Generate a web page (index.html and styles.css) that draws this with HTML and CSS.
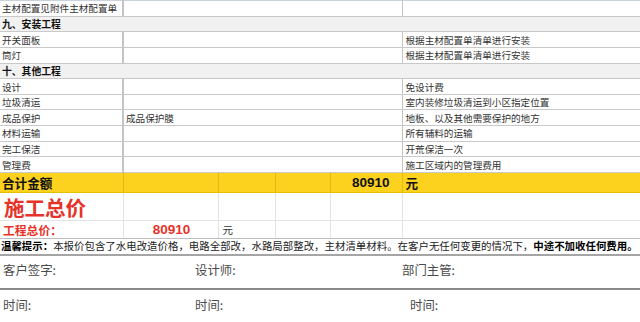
FILE: index.html
```html
<!DOCTYPE html>
<html lang="zh-CN">
<head>
<meta charset="utf-8">
<link rel="stylesheet" href="styles.css">
</head>
<body>
<table class="sheet">
  <colgroup>
    <col class="c1"><col class="c2"><col class="c3"><col class="c4"><col class="c5"><col class="c6">
  </colgroup>
  <tr class="r"><td class="k">主材配置见附件主材配置单</td><td colspan="4"></td><td class="d"></td></tr>
  <tr class="r sec"><td colspan="6">九、安装工程</td></tr>
  <tr class="r"><td class="k">开关面板</td><td colspan="4"></td><td class="d">根据主材配置单清单进行安装</td></tr>
  <tr class="r"><td class="k">筒灯</td><td colspan="4"></td><td class="d">根据主材配置单清单进行安装</td></tr>
  <tr class="r sec"><td colspan="6">十、其他工程</td></tr>
  <tr class="r"><td class="k">设计</td><td colspan="4"></td><td class="d">免设计费</td></tr>
  <tr class="r"><td class="k">垃圾清运</td><td colspan="4"></td><td class="d">室内装修垃圾清运到小区指定位置</td></tr>
  <tr class="r"><td class="k">成品保护</td><td colspan="4" class="m">成品保护膜</td><td class="d">地板、以及其他需要保护的地方</td></tr>
  <tr class="r"><td class="k">材料运输</td><td colspan="4"></td><td class="d">所有辅料的运输</td></tr>
  <tr class="r"><td class="k">完工保洁</td><td colspan="4"></td><td class="d">开荒保洁一次</td></tr>
  <tr class="r"><td class="k">管理费</td><td colspan="4"></td><td class="d">施工区域内的管理费用</td></tr>
  <tr class="total"><td class="tl">合计金额</td><td></td><td></td><td></td><td class="num">80910</td><td class="unit">元</td></tr>
  <tr class="big"><td class="bt">施工总价</td><td></td><td></td><td></td><td></td><td></td></tr>
  <tr class="sum"><td class="st">工程总价：</td><td class="sn">80910</td><td class="su">元</td><td></td><td></td><td></td></tr>
  <tr class="tip"><td colspan="6"><b>温馨提示：</b>本报价包含了水电改造价格，电路全部改，水路局部整改，主材清单材料。在客户无任何变更的情况下，<b>中途不加收任何费用。</b></td></tr>
</table>
<div class="sig">
  <div class="sig-row first">
    <span class="s1">客户签字:</span><span class="s2">设计师:</span><span class="s3">部门主管:</span>
  </div>
  <div class="sig-row second">
    <span class="s1">时间:</span><span class="s2">时间:</span><span class="s3 shift">时间:</span>
  </div>
</div>
</body>
</html>
```
FILE: styles.css
```css
html, body {
  margin: 0;
  padding: 0;
  background: #fff;
}
body {
  width: 640px;
  height: 322px;
  overflow: hidden;
  font-family: "Noto Sans CJK SC", sans-serif;
  color: #222;
}
.sheet {
  width: 640px;
  table-layout: fixed;
  border-collapse: collapse;
  border-top: 1px solid #c8d2dd;
}
.c1 { width: 123px; }
.c2 { width: 95px; }
.c3 { width: 57px; }
.c4 { width: 55px; }
.c5 { width: 72px; }
.c6 { width: 238px; }
.sheet td {
  padding: 0 0 0 2px;
  white-space: nowrap;
  overflow: hidden;
  vertical-align: middle;
  border-bottom: 1px solid #c9c9c9;
}
.r { height: 15.65px; }
.r td {
  font-size: 9.6px;
  line-height: 12px;
  color: #333;
}
.r td.k { border-right: 2px solid #c4c4c4; }
.r td.d { border-left: 1px solid #c4c4c4; padding-left: 3px; }
.r td.m { padding-left: 2px; }
.sec td {
  background: #f1f1f1;
  font-weight: bold;
  color: #111;
  font-size: 9.8px;
}
.total { height: 18px; }
.total td {
  background: #fdd21e;
  font-weight: bold;
  color: #111;
  border-top: 1px solid #c9a800;
  border-bottom: 1px solid #e6c000;
  border-right: 1px solid #e0bb10;
}
.total .tl { font-size: 12.6px; line-height: 16px; }
.total .num {
  font-family: "Liberation Sans", Arial, sans-serif;
  font-size: 13.5px;
  text-align: right;
  padding-right: 12px;
}
.total .unit { font-size: 12.6px; padding-left: 3px; border-right: none; }
.big { height: 28px; }
.big td, .sum td {
  border-right: 1px solid #e3e3e3;
  border-bottom: 1px solid #e3e3e3;
}
.big .bt {
  color: #e6332a;
  font-weight: bold;
  font-size: 20.5px;
  line-height: 24px;
  padding-left: 4px;
}
.sum { height: 17px; }
.sum .st {
  color: #e6332a;
  font-weight: bold;
  font-size: 11.8px;
  padding-left: 3px;
  border-bottom: 1px solid #bdbdbd;
}
.sum td { border-bottom: 1px solid #bdbdbd; }
.sum .sn {
  color: #e6332a;
  font-weight: bold;
  font-family: "Liberation Sans", Arial, sans-serif;
  font-size: 13.5px;
  text-align: center;
}
.sum .su { font-size: 10.5px; color: #333; padding-left: 4px; }
.tip { height: 16px; }
.tip td {
  font-size: 10.45px;
  line-height: 14px;
  color: #222;
  border-bottom: 2px solid #a5a5a5;
  padding-left: 1px;
}
.tip b { font-weight: bold; color: #000; }
.sig {
  display: flex;
  flex-direction: column;
}
.sig-row {
  display: flex;
  font-size: 12.4px;
  color: #4a4a4a;
  font-weight: normal;
}
.sig-row.first {
  height: 34px;
  padding-top: 5px;
  box-sizing: border-box;
  border-bottom: 2px solid #8a8a8a;
}
.sig-row.second {
  padding-top: 6px;
}
.s1 { width: 192px; padding-left: 3px; }
.s2 { width: 207px; }
.s3 { flex: 1; }
.s3.shift { padding-left: 8px; }
```
